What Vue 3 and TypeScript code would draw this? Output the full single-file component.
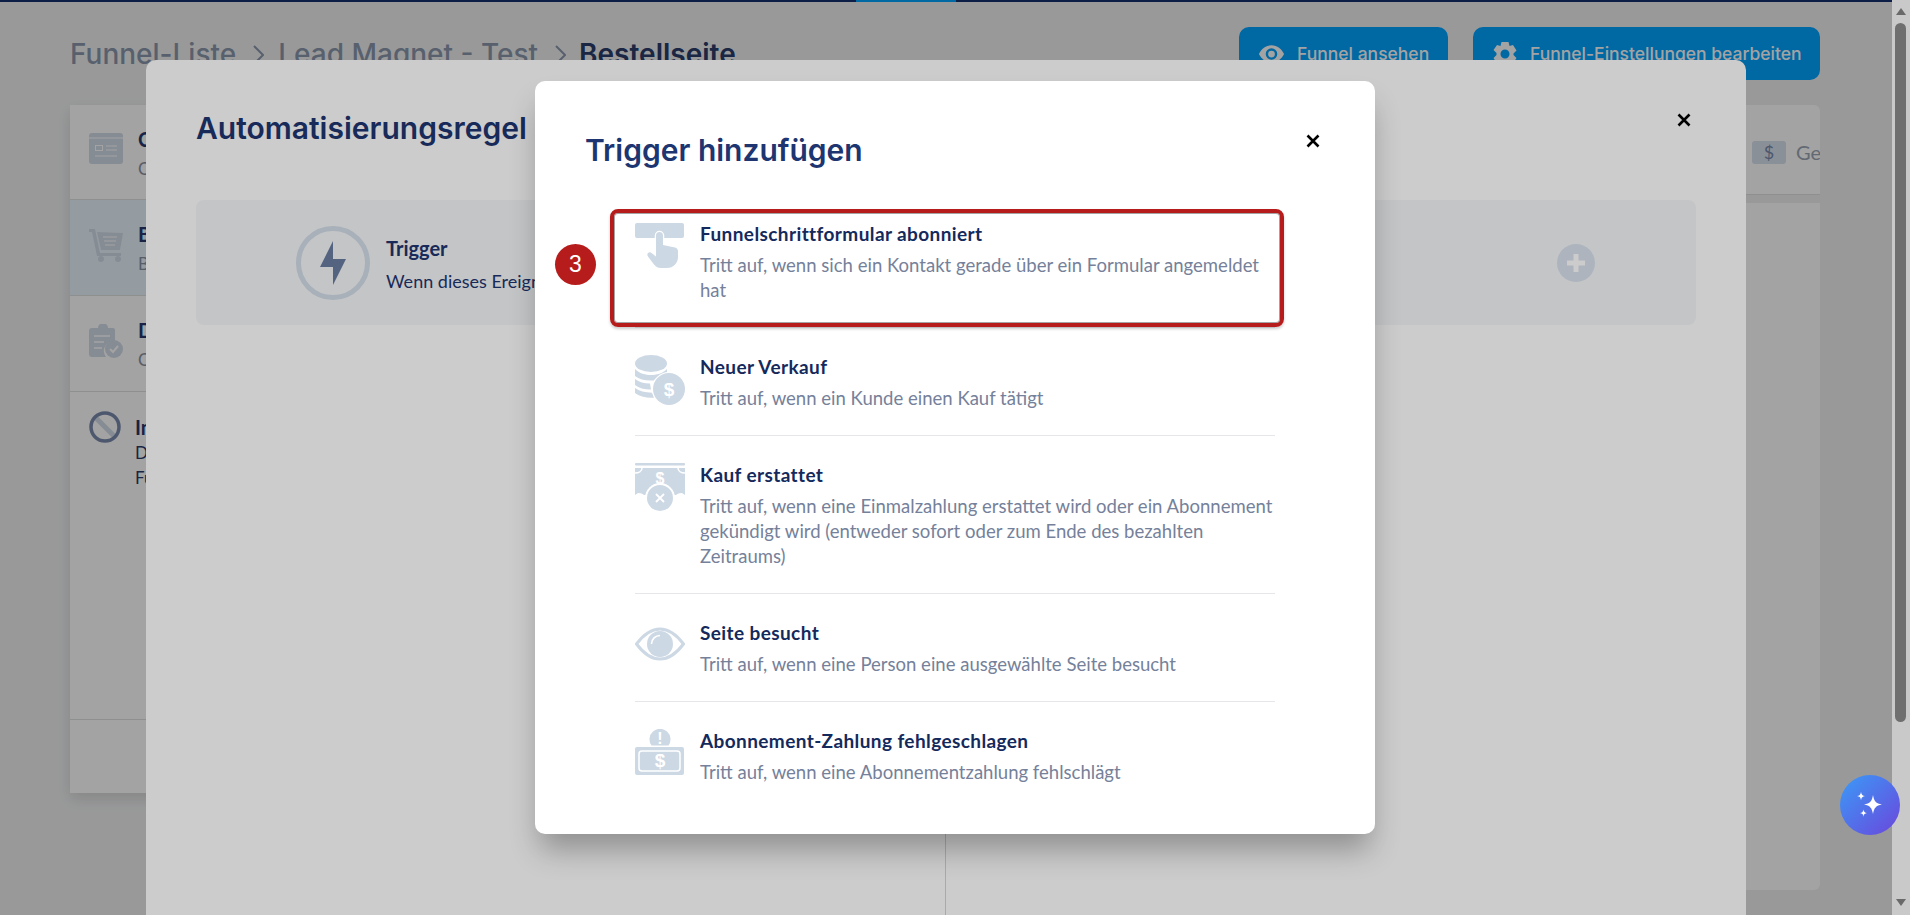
<script setup lang="ts">
interface Trigger {
  key: string
  title: string
  desc: string
}
interface Step {
  key: string
  title: string
  sub: string
  active?: boolean
}
const triggers: Trigger[] = [
  { key: 'hand', title: 'Funnelschrittformular abonniert', desc: 'Tritt auf, wenn sich ein Kontakt gerade über ein Formular angemeldet hat' },
  { key: 'coins', title: 'Neuer Verkauf', desc: 'Tritt auf, wenn ein Kunde einen Kauf tätigt' },
  { key: 'refund', title: 'Kauf erstattet', desc: 'Tritt auf, wenn eine Einmalzahlung erstattet wird oder ein Abonnement gekündigt wird (entweder sofort oder zum Ende des bezahlten Zeitraums)' },
  { key: 'eye', title: 'Seite besucht', desc: 'Tritt auf, wenn eine Person eine ausgewählte Seite besucht' },
  { key: 'fail', title: 'Abonnement-Zahlung fehlgeschlagen', desc: 'Tritt auf, wenn eine Abonnementzahlung fehlschlägt' },
]
const steps: Step[] = [
  { key: 'card', title: 'Checkout', sub: 'Checkout-Seite' },
  { key: 'cart', title: 'Bestellseite', sub: 'Bestellformular', active: true },
  { key: 'clip', title: 'Dankesseite', sub: 'Checkout abgeschlossen' },
]
</script>

<template>
  <div class="app">
    <div class="page">
      <div class="topbar"><span class="topbar-seg"></span></div>
      <header class="header">
        <div class="crumbs">
          <span>Funnel-Liste</span>
          <svg class="chev" viewBox="0 0 12 22" width="12" height="22"><path d="M2 2l9 9-9 9" fill="none" stroke="currentColor" stroke-width="2"/></svg>
          <span>Lead Magnet - Test</span>
          <svg class="chev" viewBox="0 0 12 22" width="12" height="22"><path d="M2 2l9 9-9 9" fill="none" stroke="currentColor" stroke-width="2"/></svg>
          <span class="crumb-now">Bestellseite</span>
        </div>
        <div class="actions">
          <button class="btn btn-view">
            <svg viewBox="0 0 28 20" width="27" height="20"><path fill-rule="evenodd" d="M14 1C8 1 3.500 5 1 10c2.500 5 7 9 13 9s10.500-4 13-9c-2.500-5-7-9-13-9zm0 3a6 6 0 1 1 0 12 6 6 0 0 1 0-12zm0 2.500a3.500 3.500 0 1 0 0 7 3.500 3.500 0 0 0 0-7z" fill="#fff"/></svg>
            Funnel ansehen
          </button>
          <button class="btn btn-set">
            <svg viewBox="0 0 26 26" width="26" height="26"><path fill-rule="evenodd" d="M9.500 1h7l1 4 3.500-1 3.500 5.500-3 3v1.500l3 3L21 22.500l-3.500-1-1 4h-7l-1-4-3.500 1L1.500 17l3-3v-2l-3-3L5 4l3.500 1zM13 8.500a4.500 4.500 0 1 0 0 9 4.500 4.500 0 0 0 0-9z" fill="#fff"/></svg>
            Funnel-Einstellungen bearbeiten
          </button>
        </div>
      </header>

      <div class="content">
        <aside class="side">
          <div class="side-list">
            <div v-for="s in steps" :key="s.key" class="side-row" :class="{ 'side-row-on': s.active }">
              <svg v-if="s.key === 'card'" viewBox="0 0 34 31" width="34" height="31" class="side-ico">
                <rect width="34" height="31" rx="3" fill="#d3dce8"/>
                <path d="M0 5h34" stroke="#fff" stroke-width="1"/>
                <rect x="6.500" y="12.500" width="7" height="5" fill="none" stroke="#fff" stroke-width="1"/>
                <path d="M17 13h11M17 17h11M6 23h22" stroke="#fff" stroke-width="1.200"/>
              </svg>
              <svg v-else-if="s.key === 'cart'" viewBox="0 0 34 34" width="34" height="34" class="side-ico">
                <path d="M0 1h6l5 24h21v3H8L3 4H0z" fill="#d3dce8"/>
                <path d="M8 4l26 1-3 17H12z" fill="#d3dce8"/>
                <path d="M14 9h14M15 13h12M16 17h10" stroke="#fff" stroke-width="1.200"/>
                <circle cx="12" cy="31" r="3" fill="#d3dce8"/><circle cx="29" cy="31" r="3" fill="#d3dce8"/>
              </svg>
              <svg v-else viewBox="0 0 34 34" width="34" height="34" class="side-ico">
                <path d="M3 4h6a5 5 0 0 1 10 0h5a2 2 0 0 1 2 2v11a10 10 0 0 0-9 16H3a3 3 0 0 1-3-3V7a3 3 0 0 1 3-3z" fill="#d3dce8"/>
                <path d="M5 12h16M5 18h10M5 24h8" stroke="#fff" stroke-width="1.500"/>
                <circle cx="25" cy="25" r="9" fill="#d3dce8"/>
                <path d="M21 25l3 3 5-6" fill="none" stroke="#fff" stroke-width="2"/>
              </svg>
              <div class="side-text">
                <div class="side-title">{{ s.title }}</div>
                <div class="side-sub">{{ s.sub }}</div>
              </div>
            </div>
            <div class="side-row side-row-last">
              <svg viewBox="0 0 32 32" width="32" height="32" class="side-ico">
                <path d="M6.500 6.500l19 19" stroke="#d3dce8" stroke-width="5"/>
                <circle cx="16" cy="16" r="14" fill="none" stroke="#7a8bad" stroke-width="3.500"/>
              </svg>
              <div class="side-text-off">
                <div class="side-title">Inaktiv</div>
                <div class="side-desc">Dieser Schritt ist derzeit nicht aktiv</div>
                <div class="side-desc">Funnel-Besucher sehen ihn nicht</div>
              </div>
            </div>
          </div>
          <div class="side-foot"></div>
        </aside>
        <main class="main">
          <div class="tabs">
            <span class="tab-badge">$</span>
            <span class="tab-label">Gebühren</span>
          </div>
          <div class="main-body"></div>
        </main>
      </div>

      <div class="scrim scrim-back">
        <section class="rule-modal">
          <div class="rule-head">
            <h2 class="heading">Automatisierungsregel</h2>
            <svg class="close" viewBox="0 0 14 14" width="14" height="14"><path d="M1.500 1.500l11 11M12.500 1.500l-11 11" stroke="#000" stroke-width="2.600"/></svg>
          </div>
          <div class="flow">
            <div class="flow-half flow-left">
              <span class="bolt-ring">
                <svg viewBox="0 0 26 44" width="26" height="44"><path d="M13 0v18h13L13 44V26H0z" fill="#6a7ea1"/></svg>
              </span>
              <div class="flow-text">
                <div class="flow-title">Trigger</div>
                <div class="flow-sub">Wenn dieses Ereignis eintritt</div>
              </div>
            </div>
            <div class="flow-half flow-right">
              <div class="flow-text">
                <div class="flow-title">Aktion</div>
                <div class="flow-sub">Dann tue dies</div>
              </div>
              <svg viewBox="0 0 38 38" width="38" height="38"><circle cx="19" cy="19" r="19" fill="#d9e2ee"/><path d="M19 10v18M10 19h18" stroke="#fff" stroke-width="5"/></svg>
            </div>
          </div>
          <div class="rule-lower"><div class="rule-lower-left"></div></div>
        </section>
      </div>
    </div>

    <div class="scrollbar">
      <span class="sb-up"></span>
      <span class="sb-thumb"></span>
      <span class="sb-down"></span>
    </div>

    <div class="scrim scrim-front">
      <section class="modal">
        <svg class="close close-front" viewBox="0 0 14 14" width="14" height="14"><path d="M1.500 1.500l11 11M12.500 1.500l-11 11" stroke="#000" stroke-width="2.600"/></svg>
        <h2 class="heading">Trigger hinzufügen</h2>
        <ul class="list">
          <li v-for="t in triggers" :key="t.key" class="item">
            <template v-if="t.key === 'hand'">
              <span class="highlight"></span>
              <span class="badge">3</span>
            </template>
            <svg class="ico" viewBox="0 0 50 50" width="50" height="50">
              <g v-if="t.key === 'hand'">
                <rect y="1" width="49" height="15" rx="2" fill="#cdd8e5"/>
                <path d="M21 13.500a3.500 3.500 0 0 1 7 0V23l12 2.500c2 .5 3 2 3 4V35c0 6-4.500 11-11 11h-6c-3 0-5-1-7-3.500l-6-8c-2-2.500 1-5.500 3.500-3.500l4.500 3.500z" fill="#cdd8e5" stroke="#fff" stroke-width="2.500" paint-order="stroke"/>
              </g>
              <g v-else-if="t.key === 'coins'">
                <ellipse cx="16" cy="8.500" rx="16" ry="8.500" fill="#cdd8e5"/>
                <path d="M0 14c4 4.500 11 6 16 6s12-1.500 16-6v3.500c-5 1-11 5-13 8H16C9 25.500 4 24 0 21zM0 24c4 3 9 4.500 15 4.500.5 2 .5 4 1 6C9 34.500 4 33 0 30zM0 33c4 3 10 4.500 17 4.800l2 5C10 43 4 41 0 38z" fill="#cdd8e5"/>
                <circle cx="34" cy="34" r="17" fill="#fff"/>
                <circle cx="34" cy="34" r="16" fill="#cdd8e5"/>
                <text x="34" y="41" text-anchor="middle" class="ico-glyph">$</text>
              </g>
              <g v-else-if="t.key === 'refund'">
                <rect width="50" height="2.500" y="0" rx="1" fill="#cdd8e5"/>
                <path d="M0 5h50v27l-3-2c-4 0-6 2-6 2H9s-2-2-6-2l-3 2z" fill="#cdd8e5"/>
                <path d="M0 10c4 0 7-2 7-5M50 10c-4 0-7-2-7-5" fill="none" stroke="#fff" stroke-width="1.500"/>
                <text x="25" y="21" text-anchor="middle" class="ico-glyph ico-glyph-sm">$</text>
                <circle cx="25" cy="35" r="15" fill="#fff"/>
                <circle cx="25" cy="35" r="13" fill="#cdd8e5"/>
                <path d="M21 31l8 8M29 31l-8 8" stroke="#fff" stroke-width="1.800"/>
              </g>
              <g v-else-if="t.key === 'eye'">
                <path d="M1.500 23C9 13 17 8 25 8s16 5 23.500 15C41 33 33 38 25 38S9 33 1.500 23z" fill="none" stroke="#cdd8e5" stroke-width="3"/>
                <circle cx="25" cy="23" r="13" fill="#cdd8e5"/>
                <path d="M16.500 23c0-5 4-8.500 8.500-8.500" fill="none" stroke="#fff" stroke-width="1.600"/>
              </g>
              <g v-else>
                <path d="M16.500 16.500A10.500 10.500 0 1 1 33.500 16.500Z" fill="#cdd8e5"/>
                <text x="25" y="15" text-anchor="middle" class="ico-glyph ico-glyph-sm">!</text>
                <rect y="18" width="49" height="28" rx="2" fill="#cdd8e5"/>
                <rect x="4" y="22" width="41" height="20" rx="3" fill="none" stroke="#fff" stroke-width="1.500"/>
                <text x="25" y="38" text-anchor="middle" class="ico-glyph">$</text>
              </g>
            </svg>
            <div class="item-text">
              <div class="item-title">{{ t.title }}</div>
              <div class="item-desc">{{ t.desc }}</div>
            </div>
          </li>
        </ul>
      </section>
    </div>

    <button class="chat" aria-label="Assistent">
      <svg viewBox="0 0 32 32" width="32" height="32">
        <path d="M19 6c1 6 3 8.500 9 9.500-6 1-8 3.500-9 9.500-1-6-3-8.500-9-9.500 6-1 8-3.500 9-9.500z" fill="#fff"/>
        <path d="M7 3c.5 3 1.500 3.800 4 4-2.500.5-3.500 1.200-4 4.200C6.500 8 5.500 7.500 3 7c2.500-.2 3.500-1 4-4zM9.500 20.500c.4 2.500 1.200 3.200 3.500 3.600-2.300.4-3.100 1.100-3.500 3.600-.4-2.500-1.200-3.200-3.500-3.600 2.300-.4 3.100-1.100 3.500-3.600z" fill="#fff"/>
      </svg>
    </button>
  </div>
</template>

<style>
html, body { margin: 0; overflow: hidden; }
</style>

<style scoped>
* { box-sizing: border-box; }
.app {
  position: relative;
  display: flex;
  width: 1910px;
  height: 915px;
  overflow: hidden;
  font-family: Lato, "Noto Sans", sans-serif;
}
.page {
  position: relative;
  flex: 1;
  min-width: 0;
  background: #f0f1f2;
  overflow: hidden;
  padding: 0 72px 0 70px;
}
.topbar {
  position: absolute;
  left: 0;
  right: 0;
  top: 0;
  height: 2px;
  background: #13306f;
}
.topbar-seg {
  position: absolute;
  left: 856px;
  width: 100px;
  height: 2px;
  background: #00a3ff;
}
.header {
  display: flex;
  justify-content: space-between;
  padding-top: 27px;
  height: 105px;
}
.crumbs {
  display: flex;
  align-items: center;
  gap: 12px;
  height: 53px;
  font-family: Inter, sans-serif;
  font-size: 28px;
  font-weight: 500;
  color: #8b98ad;
}
.chev { flex: none; color: #8b98ad; margin: 2px 2px 0 4px; }
.chev + span + .chev { margin-right: 1px; }
.crumb-now { color: #2a3c6a; font-weight: 600; }
.actions { display: flex; gap: 25px; }
.btn {
  display: flex;
  align-items: center;
  gap: 12px;
  height: 53px;
  border: 0;
  border-radius: 10px;
  background: #00a3ff;
  color: #fff;
  font-family: Inter, sans-serif;
  font-size: 17.500px;
  font-weight: 500;
  white-space: nowrap;
}
.btn svg { flex: none; }
.btn-view { width: 209px; padding: 0 19px; }
.btn-set { width: 347px; padding: 0 19px; }
.content {
  display: flex;
  align-items: flex-start;
  gap: 24px;
}
.side {
  width: 440px;
  height: 688px;
  background: #fff;
  box-shadow: 0 6px 14px rgba(0, 0, 0, .12);
  display: flex;
  flex-direction: column;
}
.side-list { flex: 1; }
.side-row {
  display: flex;
  align-items: flex-start;
  gap: 15px;
  height: 96px;
  padding: 28px 0 0 19px;
  border-bottom: 1px solid #dfe1e1;
}
.side-row:first-child { height: 95px; padding-top: 28px; }
.side-row-on { background: #e8f4fd; }
.side-row-last { height: auto; border: 0; padding-top: 19px; }
.side-ico { flex: none; }
.side-text { margin-top: -6px; }
.side-title { font-size: 20px; font-weight: 700; color: #26386e; line-height: 24px; }
.side-sub { font-size: 17px; color: #8b93a3; line-height: 24px; margin-top: 6px; }
.side-desc { font-size: 17px; color: #2a3c6a; line-height: 25px; }
.side-text-off { margin-left: -1px; padding-top: 4px; }
.side-text-off .side-title { margin-bottom: 1px; }
.side-foot { height: 74px; border-top: 1px solid #dfe1e1; }
.main { flex: 1; min-width: 0; display: flex; flex-direction: column; gap: 8px; height: 785px; }
.tabs {
  height: 90px;
  background: #fff;
  border-bottom: 1px solid #dfe1e1;
  border-radius: 6px 6px 0 0;
  display: flex;
  align-items: flex-start;
  justify-content: flex-end;
  overflow: hidden;
  gap: 10px;
  padding-top: 36px;
}
.tab-badge {
  flex: none;
  width: 34px;
  height: 23px;
  border-radius: 3px;
  background: #d9e2ee;
  color: #7a8bad;
  font-size: 18px;
  text-align: center;
  line-height: 23px;
  margin-left: 800px;
}
.tab-label { flex: none; width: 24px; overflow: hidden; white-space: nowrap; font-size: 20px; color: #9ca6b4; line-height: 23px; }
.main-body { flex: 1; background: #fff; border-radius: 0 0 6px 6px; }

.scrim {
  position: absolute;
  left: 0;
  top: 0;
  width: 100%;
  height: 100%;
  background: rgba(0, 0, 0, .2);
  display: flex;
  justify-content: center;
}
.scrim-back { padding-top: 60px; }
.scrim-front { align-items: center; }

.rule-modal {
  width: 1600px;
  height: 1000px;
  flex: none;
  background: #fff;
  border-radius: 10px;
  padding: 50px;
  color: #1d3570;
}
.rule-head { height: 90px; position: relative; }
.heading {
  margin: 0;
  font-family: Inter, sans-serif;
  font-size: 30px;
  font-weight: 600;
  line-height: 36px;
  color: #1d3570;
}
.close { position: absolute; }
.rule-head .close { right: 5px; top: 3px; }
.flow {
  display: flex;
  height: 125px;
  background: #f6f7f9;
  border-radius: 8px;
}
.flow-half { width: 50%; display: flex; align-items: center; }
.flow-left { padding-left: 100px; gap: 16px; }
.flow-right { justify-content: space-between; padding: 0 101px 0 60px; }
.flow-text { padding-top: 2px; }
.bolt-ring {
  width: 74px;
  height: 74px;
  flex: none;
  border: 5px solid #d3dce8;
  border-radius: 50%;
  display: flex;
  align-items: center;
  justify-content: center;
}
.flow-title { font-size: 20px; font-weight: 700; line-height: 26px; }
.flow-sub { font-size: 18px; line-height: 24px; margin-top: 8px; white-space: nowrap; }
.rule-lower { height: 600px; }
.rule-lower-left { width: 750px; height: 100%; border-right: 1px solid #d5d5d5; }

.scrollbar {
  position: relative;
  z-index: 3;
  width: 18px;
  flex: none;
  background: #c9c9c9;
}
.sb-thumb {
  position: absolute;
  left: 3px;
  top: 23px;
  width: 11px;
  height: 699px;
  border-radius: 6px;
  background: #6f6f6f;
}
.sb-up, .sb-down {
  position: absolute;
  left: 4px;
  width: 0;
  height: 0;
  border-left: 5px solid transparent;
  border-right: 5px solid transparent;
}
.sb-up { top: 8px; border-bottom: 7px solid #6a6a6a; }
.sb-down { bottom: 9px; border-top: 7px solid #6a6a6a; }

.modal {
  position: relative;
  width: 840px;
  height: 753px;
  background: #fff;
  border-radius: 10px;
  padding: 51px 100px 0 50px;
  box-shadow: 0 20px 30px -5px rgba(0, 0, 0, .3);
}
.close-front { right: 55px; top: 53px; }
.list {
  list-style: none;
  margin: 54px 0 0 50px;
  padding: 0;
}
.item {
  position: relative;
  display: flex;
  align-items: flex-start;
  gap: 15px;
  padding: 27px 0 24px;
  border-bottom: 1px solid #e4e6ea;
}
.item:first-child { padding-top: 0; }
.item:last-child { border-bottom: 0; padding-bottom: 0; }
.ico { flex: none; }
.ico-glyph { font-family: "Liberation Sans", sans-serif; font-size: 19px; font-weight: 700; fill: #fff; }
.ico-glyph-sm { font-size: 16px; }
.item-title {
  font-size: 19px;
  font-weight: 700;
  letter-spacing: .4px;
  line-height: 24px;
  color: #14295c;
  margin-bottom: 7px;
}
.item-desc {
  font-size: 18.550px;
  line-height: 25px;
  color: #75819a;
}
.highlight {
  position: absolute;
  left: -25px;
  right: -9px;
  top: -13px;
  bottom: 0;
  border: 4px solid #b71c1c;
  border-radius: 8px;
  box-shadow: inset 0 0 0 1px rgba(90, 90, 90, .55), 0 2px 3px rgba(0, 0, 0, .2);
  pointer-events: none;
}
.badge {
  position: absolute;
  left: -80px;
  top: 22px;
  width: 41px;
  height: 41px;
  border-radius: 50%;
  background: #b71c1c;
  color: #fff;
  font-family: "Liberation Sans", sans-serif;
  font-size: 23px;
  line-height: 41px;
  text-align: center;
}
.chat {
  position: absolute;
  z-index: 4;
  left: 1840px;
  top: 775px;
  width: 60px;
  height: 60px;
  border: 0;
  border-radius: 50%;
  padding: 0;
  display: flex;
  align-items: center;
  justify-content: center;
  background: linear-gradient(135deg, #3a9bf8, #6b46db);
}
</style>
